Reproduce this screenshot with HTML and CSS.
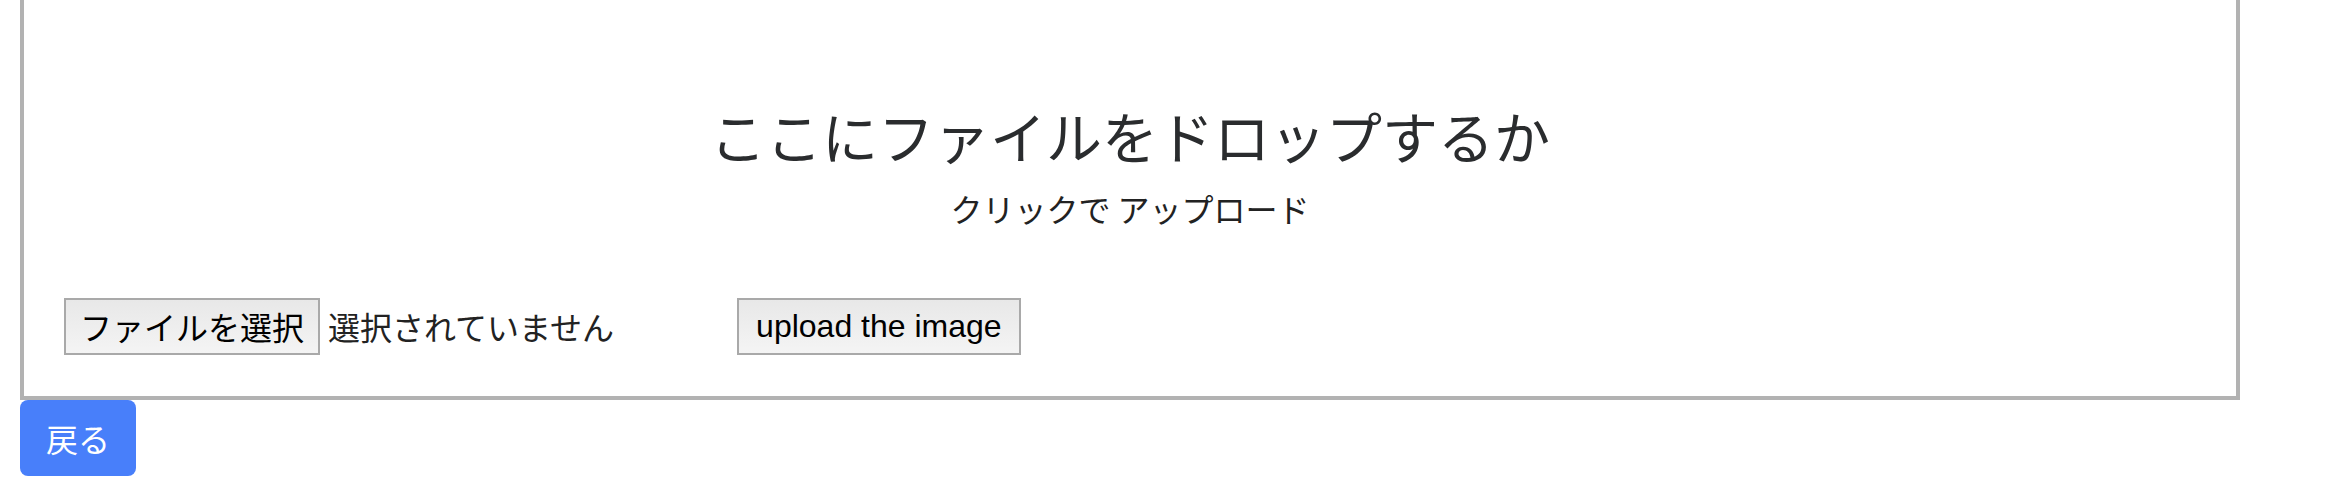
FILE: index.html
```html
<!DOCTYPE html>
<html lang="ja">
<head>
<meta charset="utf-8">
<title>upload</title>
<link rel="stylesheet" href="styles.css">
</head>
<body>
<div class="page">
  <form class="dropzone">
    <div class="dz-title">ここにファイルをドロップするか</div>
    <div class="dz-sub">クリックで アップロード</div>
    <div class="controls">
      <span class="file-btn">ファイルを選択</span>
      <span class="file-name">選択されていません</span>
      <button type="button" class="upload-btn">upload the image</button>
    </div>
  </form>
  <a class="back-btn">戻る</a>
</div>
</body>
</html>
```

FILE: styles.css
```css
html, body {
  margin: 0;
  padding: 0;
  background: #ffffff;
}
.page {
  padding: 0 112px 0 20px;
  font-family: "Noto Sans CJK JP", "Liberation Sans", sans-serif;
}
.dropzone {
  margin: -4px 0 0 0;
  border: 4px solid #b2b2b2;
  padding: 95px 0 41px 40px;
  display: flex;
  flex-direction: column;
}
.dz-title {
  text-align: center;
  font-size: 56px;
  line-height: 80px;
  color: #2a2c2e;
  padding-right: 40px;
}
.dz-sub {
  margin-top: 9px;
  text-align: center;
  font-size: 32px;
  line-height: 48px;
  color: #222222;
  padding-right: 40px;
}
.controls {
  margin-top: 66px;
  display: flex;
  align-items: center;
  height: 57px;
}
.file-btn {
  box-sizing: border-box;
  height: 57px;
  padding: 0 14px;
  border: 2px solid #a9a9a9;
  background: linear-gradient(#e8e8e8, #f4f4f4);
  font-size: 32px;
  line-height: 53px;
  color: #000000;
}
.file-name {
  margin-left: 8px;
  font-size: 32px;
  line-height: 53px;
  color: #222222;
}
.upload-btn {
  box-sizing: border-box;
  margin-left: 123px;
  height: 57px;
  padding: 0 17px;
  border: 2px solid #a9a9a9;
  border-radius: 0;
  background: linear-gradient(#e8e8e8, #f4f4f4);
  font-family: "Liberation Sans", Arial, sans-serif;
  font-size: 32px;
  line-height: 53px;
  color: #000000;
}
.back-btn {
  display: inline-block;
  padding: 0 26px;
  height: 76px;
  line-height: 76px;
  font-size: 32px;
  color: #ffffff;
  background: #487ffa;
  border-radius: 8px;
}
```
